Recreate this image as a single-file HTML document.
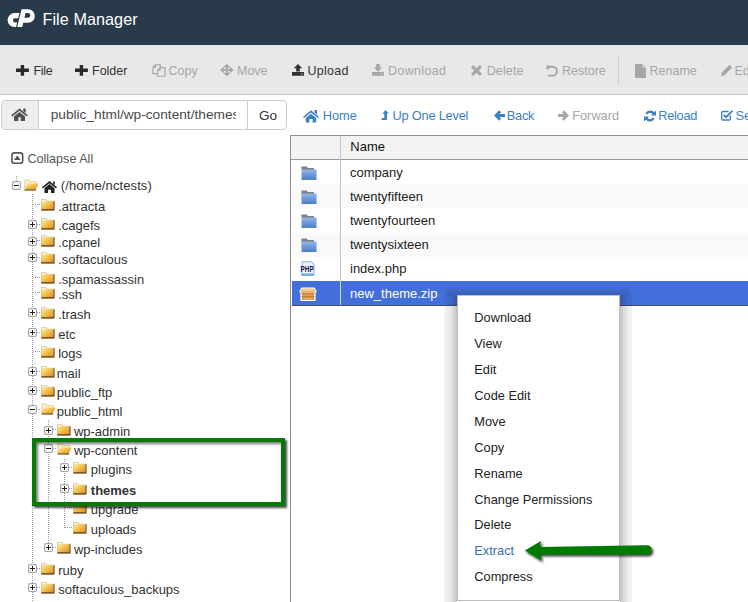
<!DOCTYPE html>
<html><head><meta charset="utf-8">
<style>
*{margin:0;padding:0;box-sizing:border-box}
html,body{width:748px;height:602px;overflow:hidden;background:#fff;font-family:"Liberation Sans",sans-serif;color:#333}
.a{position:absolute;white-space:nowrap}
#hdr{position:absolute;left:0;top:0;width:748px;height:45px;background:#293a4a}
#tb{position:absolute;left:0;top:45px;width:748px;height:50px;background:#e8e8e8;border-bottom:1px solid #c5c5c8}
.tt{font-size:12.5px;line-height:14px;color:#333}
.dis{color:#a6a6a6}
.nav{font-size:12.8px;line-height:14px;color:#3b7fc4}
.tr{font-size:13px;line-height:14px;color:#333}
.tbl{font-size:13px;line-height:14px;color:#222}
.cm{font-size:12.8px;line-height:14px;color:#222}
svg{position:absolute;overflow:visible}
</style></head><body>
<!-- header -->
<div id="hdr"></div>
<svg style="left:0;top:0" width="45" height="45" viewBox="0 0 45 45">
 <path fill="#fff" d="M19.4 13.1 L14.5 13.1 A6.95 6.95 0 0 0 14.5 27 L16.05 27 L17.15 22.5 L15 22.5 A2.15 2.15 0 0 1 15 18.2 L18.2 18.2 Z"/>
 <path fill="#fff" fill-rule="evenodd" d="M21.5 9.2 L28.1 9.2 A6.75 6.75 0 0 1 28.1 22.7 L23.24 22.7 L22.2 27 L17.2 27 Z M25.58 13 L28 13 A2.35 2.35 0 0 1 28 17.7 L24.45 17.7 Z"/>
</svg>
<div class="a" style="left:42.5px;top:9.5px;font-size:16.2px;line-height:18px;color:#fff;letter-spacing:0.06px">File Manager</div>

<!-- toolbar -->
<div id="tb"></div>
<svg style="left:16px;top:65px" width="13" height="11" viewBox="0 0 13 11"><path fill="#2a2a2a" d="M4.7 0h3.4v3.6H12.9V7.1H8.1V10.7H4.7V7.1H0V3.6H4.7z"/></svg>
<div class="a tt" style="left:33.5px;top:64px;letter-spacing:-0.35px">File</div>
<svg style="left:75.2px;top:65px" width="13" height="11" viewBox="0 0 13 11"><path fill="#2a2a2a" d="M4.7 0h3.4v3.6H12.9V7.1H8.1V10.7H4.7V7.1H0V3.6H4.7z"/></svg>
<div class="a tt" style="left:92px;top:64px">Folder</div>

<svg style="left:151.5px;top:64px" width="14" height="13" viewBox="0 0 14 13"><path fill="none" stroke="#a6a6a6" stroke-width="1.15" d="M5.2 9.6H0.9V3.4L3.4 0.9H8.3V3.3 M0.9 3.4H3.4V0.9"/><path fill="none" stroke="#a6a6a6" stroke-width="1.15" d="M5.6 6.1L8.1 3.6H13V12.2H5.6Z M5.6 6.1H8.1V3.6"/></svg>
<div class="a tt dis" style="left:168.5px;top:64px">Copy</div>
<svg style="left:220.3px;top:63.7px" width="14" height="13" viewBox="0 0 14 13"><path fill="#a8a8a8" fill-rule="evenodd" d="M6.85 0 13.7 6.1 6.85 12.2 0 6.1Z M3.9 3.5h2v1.8h-2z M7.8 3.5h2v1.8h-2z M3.9 6.9h2v1.8h-2z M7.8 6.9h2v1.8h-2z"/></svg>
<div class="a tt dis" style="left:237px;top:64px">Move</div>

<svg style="left:291.5px;top:64px" width="12" height="12" viewBox="0 0 12 12"><path fill="#333" d="M6 0 10.3 4.2H7.8V7.6H4.2V4.2H1.7z M0 8h12V11.8H0z"/><rect x="9.3" y="9.4" width="1.3" height="1.1" fill="#e8e8e8"/></svg>
<div class="a tt" style="left:307.5px;top:64px;letter-spacing:0.25px">Upload</div>
<svg style="left:372px;top:64px" width="12" height="12" viewBox="0 0 12 12"><path fill="#a6a6a6" d="M4.2 0h3.6v3.6h2.5L6 7.8 1.7 3.6h2.5z M0 8h12V11.8H0z"/><rect x="9.3" y="9.4" width="1.3" height="1.1" fill="#e8e8e8"/></svg>
<div class="a tt dis" style="left:388px;top:64px;letter-spacing:0.33px">Download</div>
<svg style="left:470.5px;top:64.5px" width="11" height="11" viewBox="0 0 11 11"><path fill="#a6a6a6" d="M0 2.2 2.2 0 5.5 3.3 8.8 0 11 2.2 7.7 5.5 11 8.8 8.8 11 5.5 7.7 2.2 11 0 8.8 3.3 5.5z"/></svg>
<div class="a tt dis" style="left:486.7px;top:64px;letter-spacing:0.12px">Delete</div>
<svg style="left:546.4px;top:64.6px" width="13" height="12" viewBox="0 0 13 12"><path fill="none" stroke="#a6a6a6" stroke-width="1.9" d="M2.5 1.7H6.5A4.45 4.45 0 0 1 6.5 10.6H1.8"/><path fill="#a6a6a6" d="M0.3 0.4H4V2.8L1.6 4.8 0.3 3.6z"/></svg>
<div class="a tt dis" style="left:562px;top:64px">Restore</div>
<div class="a" style="left:618px;top:55px;width:1px;height:30px;background:#cfcfcf"></div>
<svg style="left:635px;top:63.5px" width="11" height="14" viewBox="0 0 11 14"><path fill="#a6a6a6" d="M0 0h7l4 4v10H0z"/><path fill="#c8c8c8" d="M7 0v4h4z"/></svg>
<div class="a tt dis" style="left:649.5px;top:64px">Rename</div>
<svg style="left:721px;top:64px" width="12" height="12" viewBox="0 0 12 12"><path fill="#a6a6a6" d="M0 12 0.8 8.6 8.6 0.8 11.2 3.4 3.4 11.2z"/></svg>
<div class="a tt dis" style="left:734.5px;top:64px">Ed</div>

<!-- path bar -->
<div class="a" style="left:1px;top:100px;width:286px;height:30px;border:1px solid #ccc;border-radius:4px;background:#fff"></div>
<div class="a" style="left:2px;top:101px;width:37px;height:28px;background:#eee;border-right:1px solid #ccc;border-radius:3px 0 0 3px"></div>
<svg style="left:11px;top:108px" width="17" height="13" viewBox="0 0 17 13"><path fill="#505050" d="M8.5 0.6 16.8 7.3 15.7 8.6 8.5 2.8 1.3 8.6 0.2 7.3z M12.3 0.5h2.4v4.4l-2.4-1.9z M3 8.5 8.5 4 14 8.5V13H9.7V9.2H7.3V13H3z"/></svg>
<div class="a" style="left:39px;top:101px;width:197px;height:28px;overflow:hidden">
 <div class="a" style="left:11.7px;top:6px;font-size:13.7px;line-height:16px;color:#4a4a4a">public_html/wp-content/themes</div>
</div>
<div class="a" style="left:247px;top:101px;width:1px;height:28px;background:#ccc"></div>
<div class="a" style="left:259px;top:108px;font-size:13.5px;line-height:16px;color:#333">Go</div>

<!-- nav -->
<svg style="left:303px;top:109.5px" width="16" height="12.5" viewBox="0 0 16 12.5"><path fill="#3b7fc4" d="M8 0.3 16 6.9 14.9 8.1 8 2.6 1.1 8.1 0 6.9z M11.6 0h2.4v4.6l-2.4-2z M2.8 8 8 3.8 13.2 8V12.5H9.6V9H6.4V12.5H2.8z"/></svg>
<div class="a nav" style="left:322.7px;top:108.6px">Home</div>
<svg style="left:381px;top:110px" width="8" height="10" viewBox="0 0 8 10"><path fill="#3b7fc4" d="M4.6 0 7.8 3.4H5.9V10H0.2L1.4 8H3.3V3.4H1.4z"/></svg>
<div class="a nav" style="left:392.4px;top:108.6px;letter-spacing:-0.2px">Up One Level</div>
<svg style="left:493.5px;top:110px" width="11" height="11" viewBox="0 0 11 11"><path fill="#3b7fc4" d="M0 5.5 5.2 0.3 7.3 2.4 5.1 4.1H11V6.9H5.1L7.3 8.6 5.2 10.7z"/></svg>
<div class="a nav" style="left:506.8px;top:108.6px;letter-spacing:-0.25px">Back</div>
<svg style="left:557.5px;top:110px" width="11" height="11" viewBox="0 0 11 11"><path fill="#a6a6a6" d="M11 5.5 5.8 0.3 3.7 2.4 5.9 4.1H0V6.9H5.9L3.7 8.6 5.8 10.7z"/></svg>
<div class="a nav" style="left:572.2px;top:108.6px;color:#a6a6a6">Forward</div>
<svg style="left:644px;top:109.5px" width="12" height="12" viewBox="0 0 12 12"><path fill="none" stroke="#3b7fc4" stroke-width="2.2" d="M10 4.2A4.3 4.3 0 0 0 2.3 4 M2 7.8A4.3 4.3 0 0 0 9.7 8"/><path fill="#3b7fc4" d="M12 0.5V5.5H7z M0 11.5V6.5H5z"/></svg>
<div class="a nav" style="left:658.3px;top:108.6px;letter-spacing:-0.3px">Reload</div>
<svg style="left:720.5px;top:109.5px" width="13" height="11" viewBox="0 0 13 11"><path fill="none" stroke="#3b7fc4" stroke-width="1.3" d="M9.4 5.6V8.7A1.3 1.3 0 0 1 8.1 10H2A1.3 1.3 0 0 1 0.7 8.7V2.8A1.3 1.3 0 0 1 2 1.5H7.6"/><path fill="none" stroke="#3b7fc4" stroke-width="1.9" d="M2.8 5 5 7.2 11.4 0.9"/></svg>
<div class="a nav" style="left:735.4px;top:108.6px">Se</div>

<!-- collapse all -->
<svg style="left:11px;top:152px" width="13" height="12" viewBox="0 0 13 12"><rect x="0.9" y="0.9" width="10.8" height="10.4" rx="2.6" fill="none" stroke="#555" stroke-width="1.6"/><path fill="#555" d="M3 8 6.3 3.6 9.6 8z"/></svg>
<div class="a tr" style="left:27.4px;top:151.8px;font-size:12.6px;color:#555">Collapse All</div>

<div id="tree"><svg width="0" height="0" style="position:absolute"><defs><linearGradient id="fg" x1="0" y1="0" x2="1" y2="1"><stop offset="0" stop-color="#ffeea0"/><stop offset="0.45" stop-color="#f3c250"/><stop offset="1" stop-color="#dc8a20"/></linearGradient></defs></svg>
<div class="a" style="left:16px;top:176px;width:1px;height:5px;background:repeating-linear-gradient(#9a9a9a 0 1px,transparent 1px 2px)"></div>
<div class="a" style="left:32px;top:194px;width:1px;height:408px;background:repeating-linear-gradient(#9a9a9a 0 1px,transparent 1px 2px)"></div>
<div class="a" style="left:48px;top:420px;width:1px;height:128px;background:repeating-linear-gradient(#9a9a9a 0 1px,transparent 1px 2px)"></div>
<div class="a" style="left:64px;top:459px;width:1px;height:69px;background:repeating-linear-gradient(#9a9a9a 0 1px,transparent 1px 2px)"></div>
<svg style="left:11.8px;top:180.9px" width="9" height="9" viewBox="0 0 9 9"><rect x="0.6" y="0.6" width="7.8" height="7.8" rx="1.2" fill="#fff" stroke="#a8a8a8" stroke-width="1.2"/><path d="M2 4.5h5" stroke="#222" stroke-width="1"/></svg>
<svg style="left:24.0px;top:179.3px" width="16" height="12" viewBox="0 0 16 12"><path fill="#d2bfa0" d="M0.5 0.5h4.5l1.2 1.5h6.3v2.5H3.5L0.5 11z"/><path fill="#fdf3c0" d="M1.2 1.2h3.4l1.1 1.3h5.9v2H3.2L1.2 8.5z"/><path fill="url(#fg)" d="M3.4 4.4h11.2l-3 6.6H0.6z"/><path fill="#5e3a0c" d="M0.6 10.6h11.6l-0.3 0.8H0.4z"/></svg>
<svg style="left:42.4px;top:180.7px" width="15" height="12" viewBox="0 0 15 12"><path fill="#222" d="M7.5 0 15 6.3 14 7.5 7.5 2.2 1 7.5 0 6.3z M11 0.6h1.8v3.3L11 2.4z M2.5 7.2 7.5 3 12.5 7.2V12H9V8.8H6V12H2.5z"/></svg>
<div class="a tr" style="left:60.8px;top:179.4px;letter-spacing:0.1px;">(/home/nctests)</div>
<div class="a" style="left:33px;top:204px;width:7px;height:1px;background:repeating-linear-gradient(90deg,#9a9a9a 0 1px,transparent 1px 2px)"></div>
<svg style="left:40.5px;top:199.2px" width="14" height="12" viewBox="0 0 14 12"><path fill="#d2bfa0" d="M0 0.3h5.2l1.2 1.5h6.9v9.6H0z"/><path fill="url(#fg)" d="M0.8 2.2h12v8.3H0.8z"/><path fill="#fdf6c8" d="M0.8 1h4l0.9 1.2H0.8z"/><path fill="#5e3a0c" d="M0.3 10.3h13.2v1.1H0.3z M12.6 2.2h0.9v9.2h-0.9z"/></svg>
<div class="a tr" style="left:58.2px;top:200.3px;">.attracta</div>
<div class="a" style="left:33px;top:224px;width:7px;height:1px;background:repeating-linear-gradient(90deg,#9a9a9a 0 1px,transparent 1px 2px)"></div>
<svg style="left:28.3px;top:219.7px" width="9" height="9" viewBox="0 0 9 9"><rect x="0.6" y="0.6" width="7.8" height="7.8" rx="1.2" fill="#fff" stroke="#a8a8a8" stroke-width="1.2"/><path d="M2 4.5h5" stroke="#222" stroke-width="1"/><path d="M4.5 2v5" stroke="#222" stroke-width="1"/></svg>
<svg style="left:40.5px;top:218.3px" width="14" height="12" viewBox="0 0 14 12"><path fill="#d2bfa0" d="M0 0.3h5.2l1.2 1.5h6.9v9.6H0z"/><path fill="url(#fg)" d="M0.8 2.2h12v8.3H0.8z"/><path fill="#fdf6c8" d="M0.8 1h4l0.9 1.2H0.8z"/><path fill="#5e3a0c" d="M0.3 10.3h13.2v1.1H0.3z M12.6 2.2h0.9v9.2h-0.9z"/></svg>
<div class="a tr" style="left:58.2px;top:219.4px;">.cagefs</div>
<div class="a" style="left:33px;top:240px;width:7px;height:1px;background:repeating-linear-gradient(90deg,#9a9a9a 0 1px,transparent 1px 2px)"></div>
<svg style="left:28.3px;top:236.6px" width="9" height="9" viewBox="0 0 9 9"><rect x="0.6" y="0.6" width="7.8" height="7.8" rx="1.2" fill="#fff" stroke="#a8a8a8" stroke-width="1.2"/><path d="M2 4.5h5" stroke="#222" stroke-width="1"/><path d="M4.5 2v5" stroke="#222" stroke-width="1"/></svg>
<svg style="left:40.5px;top:235.2px" width="14" height="12" viewBox="0 0 14 12"><path fill="#d2bfa0" d="M0 0.3h5.2l1.2 1.5h6.9v9.6H0z"/><path fill="url(#fg)" d="M0.8 2.2h12v8.3H0.8z"/><path fill="#fdf6c8" d="M0.8 1h4l0.9 1.2H0.8z"/><path fill="#5e3a0c" d="M0.3 10.3h13.2v1.1H0.3z M12.6 2.2h0.9v9.2h-0.9z"/></svg>
<div class="a tr" style="left:58.2px;top:236.3px;">.cpanel</div>
<div class="a" style="left:33px;top:257px;width:7px;height:1px;background:repeating-linear-gradient(90deg,#9a9a9a 0 1px,transparent 1px 2px)"></div>
<svg style="left:28.3px;top:253.2px" width="9" height="9" viewBox="0 0 9 9"><rect x="0.6" y="0.6" width="7.8" height="7.8" rx="1.2" fill="#fff" stroke="#a8a8a8" stroke-width="1.2"/><path d="M2 4.5h5" stroke="#222" stroke-width="1"/><path d="M4.5 2v5" stroke="#222" stroke-width="1"/></svg>
<svg style="left:40.5px;top:251.8px" width="14" height="12" viewBox="0 0 14 12"><path fill="#d2bfa0" d="M0 0.3h5.2l1.2 1.5h6.9v9.6H0z"/><path fill="url(#fg)" d="M0.8 2.2h12v8.3H0.8z"/><path fill="#fdf6c8" d="M0.8 1h4l0.9 1.2H0.8z"/><path fill="#5e3a0c" d="M0.3 10.3h13.2v1.1H0.3z M12.6 2.2h0.9v9.2h-0.9z"/></svg>
<div class="a tr" style="left:58.2px;top:252.9px;">.softaculous</div>
<div class="a" style="left:33px;top:277px;width:7px;height:1px;background:repeating-linear-gradient(90deg,#9a9a9a 0 1px,transparent 1px 2px)"></div>
<svg style="left:40.5px;top:271.8px" width="14" height="12" viewBox="0 0 14 12"><path fill="#d2bfa0" d="M0 0.3h5.2l1.2 1.5h6.9v9.6H0z"/><path fill="url(#fg)" d="M0.8 2.2h12v8.3H0.8z"/><path fill="#fdf6c8" d="M0.8 1h4l0.9 1.2H0.8z"/><path fill="#5e3a0c" d="M0.3 10.3h13.2v1.1H0.3z M12.6 2.2h0.9v9.2h-0.9z"/></svg>
<div class="a tr" style="left:58.2px;top:272.9px;">.spamassassin</div>
<div class="a" style="left:33px;top:292px;width:7px;height:1px;background:repeating-linear-gradient(90deg,#9a9a9a 0 1px,transparent 1px 2px)"></div>
<svg style="left:40.5px;top:287.0px" width="14" height="12" viewBox="0 0 14 12"><path fill="#d2bfa0" d="M0 0.3h5.2l1.2 1.5h6.9v9.6H0z"/><path fill="url(#fg)" d="M0.8 2.2h12v8.3H0.8z"/><path fill="#fdf6c8" d="M0.8 1h4l0.9 1.2H0.8z"/><path fill="#5e3a0c" d="M0.3 10.3h13.2v1.1H0.3z M12.6 2.2h0.9v9.2h-0.9z"/></svg>
<div class="a tr" style="left:58.2px;top:288.1px;">.ssh</div>
<div class="a" style="left:33px;top:312px;width:7px;height:1px;background:repeating-linear-gradient(90deg,#9a9a9a 0 1px,transparent 1px 2px)"></div>
<svg style="left:28.3px;top:307.9px" width="9" height="9" viewBox="0 0 9 9"><rect x="0.6" y="0.6" width="7.8" height="7.8" rx="1.2" fill="#fff" stroke="#a8a8a8" stroke-width="1.2"/><path d="M2 4.5h5" stroke="#222" stroke-width="1"/><path d="M4.5 2v5" stroke="#222" stroke-width="1"/></svg>
<svg style="left:40.5px;top:306.5px" width="14" height="12" viewBox="0 0 14 12"><path fill="#d2bfa0" d="M0 0.3h5.2l1.2 1.5h6.9v9.6H0z"/><path fill="url(#fg)" d="M0.8 2.2h12v8.3H0.8z"/><path fill="#fdf6c8" d="M0.8 1h4l0.9 1.2H0.8z"/><path fill="#5e3a0c" d="M0.3 10.3h13.2v1.1H0.3z M12.6 2.2h0.9v9.2h-0.9z"/></svg>
<div class="a tr" style="left:58.2px;top:307.6px;">.trash</div>
<div class="a" style="left:33px;top:332px;width:7px;height:1px;background:repeating-linear-gradient(90deg,#9a9a9a 0 1px,transparent 1px 2px)"></div>
<svg style="left:28.3px;top:327.9px" width="9" height="9" viewBox="0 0 9 9"><rect x="0.6" y="0.6" width="7.8" height="7.8" rx="1.2" fill="#fff" stroke="#a8a8a8" stroke-width="1.2"/><path d="M2 4.5h5" stroke="#222" stroke-width="1"/><path d="M4.5 2v5" stroke="#222" stroke-width="1"/></svg>
<svg style="left:40.5px;top:326.5px" width="14" height="12" viewBox="0 0 14 12"><path fill="#d2bfa0" d="M0 0.3h5.2l1.2 1.5h6.9v9.6H0z"/><path fill="url(#fg)" d="M0.8 2.2h12v8.3H0.8z"/><path fill="#fdf6c8" d="M0.8 1h4l0.9 1.2H0.8z"/><path fill="#5e3a0c" d="M0.3 10.3h13.2v1.1H0.3z M12.6 2.2h0.9v9.2h-0.9z"/></svg>
<div class="a tr" style="left:58.2px;top:327.6px;">etc</div>
<div class="a" style="left:33px;top:351px;width:7px;height:1px;background:repeating-linear-gradient(90deg,#9a9a9a 0 1px,transparent 1px 2px)"></div>
<svg style="left:40.5px;top:345.7px" width="14" height="12" viewBox="0 0 14 12"><path fill="#d2bfa0" d="M0 0.3h5.2l1.2 1.5h6.9v9.6H0z"/><path fill="url(#fg)" d="M0.8 2.2h12v8.3H0.8z"/><path fill="#fdf6c8" d="M0.8 1h4l0.9 1.2H0.8z"/><path fill="#5e3a0c" d="M0.3 10.3h13.2v1.1H0.3z M12.6 2.2h0.9v9.2h-0.9z"/></svg>
<div class="a tr" style="left:58.2px;top:346.8px;">logs</div>
<div class="a" style="left:33px;top:371px;width:7px;height:1px;background:repeating-linear-gradient(90deg,#9a9a9a 0 1px,transparent 1px 2px)"></div>
<svg style="left:28.3px;top:367.0px" width="9" height="9" viewBox="0 0 9 9"><rect x="0.6" y="0.6" width="7.8" height="7.8" rx="1.2" fill="#fff" stroke="#a8a8a8" stroke-width="1.2"/><path d="M2 4.5h5" stroke="#222" stroke-width="1"/><path d="M4.5 2v5" stroke="#222" stroke-width="1"/></svg>
<svg style="left:40.5px;top:365.6px" width="14" height="12" viewBox="0 0 14 12"><path fill="#d2bfa0" d="M0 0.3h5.2l1.2 1.5h6.9v9.6H0z"/><path fill="url(#fg)" d="M0.8 2.2h12v8.3H0.8z"/><path fill="#fdf6c8" d="M0.8 1h4l0.9 1.2H0.8z"/><path fill="#5e3a0c" d="M0.3 10.3h13.2v1.1H0.3z M12.6 2.2h0.9v9.2h-0.9z"/></svg>
<div class="a tr" style="left:56.7px;top:366.7px;">mail</div>
<div class="a" style="left:33px;top:390px;width:7px;height:1px;background:repeating-linear-gradient(90deg,#9a9a9a 0 1px,transparent 1px 2px)"></div>
<svg style="left:28.3px;top:386.3px" width="9" height="9" viewBox="0 0 9 9"><rect x="0.6" y="0.6" width="7.8" height="7.8" rx="1.2" fill="#fff" stroke="#a8a8a8" stroke-width="1.2"/><path d="M2 4.5h5" stroke="#222" stroke-width="1"/><path d="M4.5 2v5" stroke="#222" stroke-width="1"/></svg>
<svg style="left:40.5px;top:384.9px" width="14" height="12" viewBox="0 0 14 12"><path fill="#d2bfa0" d="M0 0.3h5.2l1.2 1.5h6.9v9.6H0z"/><path fill="url(#fg)" d="M0.8 2.2h12v8.3H0.8z"/><path fill="#fdf6c8" d="M0.8 1h4l0.9 1.2H0.8z"/><path fill="#5e3a0c" d="M0.3 10.3h13.2v1.1H0.3z M12.6 2.2h0.9v9.2h-0.9z"/></svg>
<div class="a tr" style="left:56.7px;top:386.0px;">public_ftp</div>
<div class="a" style="left:33px;top:409px;width:7px;height:1px;background:repeating-linear-gradient(90deg,#9a9a9a 0 1px,transparent 1px 2px)"></div>
<svg style="left:28.3px;top:404.9px" width="9" height="9" viewBox="0 0 9 9"><rect x="0.6" y="0.6" width="7.8" height="7.8" rx="1.2" fill="#fff" stroke="#a8a8a8" stroke-width="1.2"/><path d="M2 4.5h5" stroke="#222" stroke-width="1"/></svg>
<svg style="left:40.5px;top:403.3px" width="16" height="12" viewBox="0 0 16 12"><path fill="#d2bfa0" d="M0.5 0.5h4.5l1.2 1.5h6.3v2.5H3.5L0.5 11z"/><path fill="#fdf3c0" d="M1.2 1.2h3.4l1.1 1.3h5.9v2H3.2L1.2 8.5z"/><path fill="url(#fg)" d="M3.4 4.4h11.2l-3 6.6H0.6z"/><path fill="#5e3a0c" d="M0.6 10.6h11.6l-0.3 0.8H0.4z"/></svg>
<div class="a tr" style="left:56.7px;top:404.6px;">public_html</div>
<div class="a" style="left:49px;top:429px;width:8px;height:1px;background:repeating-linear-gradient(90deg,#9a9a9a 0 1px,transparent 1px 2px)"></div>
<svg style="left:44.3px;top:425.5px" width="9" height="9" viewBox="0 0 9 9"><rect x="0.6" y="0.6" width="7.8" height="7.8" rx="1.2" fill="#fff" stroke="#a8a8a8" stroke-width="1.2"/><path d="M2 4.5h5" stroke="#222" stroke-width="1"/><path d="M4.5 2v5" stroke="#222" stroke-width="1"/></svg>
<svg style="left:57.0px;top:424.1px" width="14" height="12" viewBox="0 0 14 12"><path fill="#d2bfa0" d="M0 0.3h5.2l1.2 1.5h6.9v9.6H0z"/><path fill="url(#fg)" d="M0.8 2.2h12v8.3H0.8z"/><path fill="#fdf6c8" d="M0.8 1h4l0.9 1.2H0.8z"/><path fill="#5e3a0c" d="M0.3 10.3h13.2v1.1H0.3z M12.6 2.2h0.9v9.2h-0.9z"/></svg>
<div class="a tr" style="left:73.9px;top:425.2px;">wp-admin</div>
<div class="a" style="left:49px;top:448px;width:8px;height:1px;background:repeating-linear-gradient(90deg,#9a9a9a 0 1px,transparent 1px 2px)"></div>
<svg style="left:44.3px;top:444.2px" width="9" height="9" viewBox="0 0 9 9"><rect x="0.6" y="0.6" width="7.8" height="7.8" rx="1.2" fill="#fff" stroke="#a8a8a8" stroke-width="1.2"/><path d="M2 4.5h5" stroke="#222" stroke-width="1"/></svg>
<svg style="left:57.0px;top:442.6px" width="16" height="12" viewBox="0 0 16 12"><path fill="#d2bfa0" d="M0.5 0.5h4.5l1.2 1.5h6.3v2.5H3.5L0.5 11z"/><path fill="#fdf3c0" d="M1.2 1.2h3.4l1.1 1.3h5.9v2H3.2L1.2 8.5z"/><path fill="url(#fg)" d="M3.4 4.4h11.2l-3 6.6H0.6z"/><path fill="#5e3a0c" d="M0.6 10.6h11.6l-0.3 0.8H0.4z"/></svg>
<div class="a tr" style="left:73.9px;top:443.9px;">wp-content</div>
<div class="a" style="left:65px;top:467px;width:7px;height:1px;background:repeating-linear-gradient(90deg,#9a9a9a 0 1px,transparent 1px 2px)"></div>
<svg style="left:60.3px;top:463.3px" width="9" height="9" viewBox="0 0 9 9"><rect x="0.6" y="0.6" width="7.8" height="7.8" rx="1.2" fill="#fff" stroke="#a8a8a8" stroke-width="1.2"/><path d="M2 4.5h5" stroke="#222" stroke-width="1"/><path d="M4.5 2v5" stroke="#222" stroke-width="1"/></svg>
<svg style="left:72.8px;top:461.9px" width="14" height="12" viewBox="0 0 14 12"><path fill="#d2bfa0" d="M0 0.3h5.2l1.2 1.5h6.9v9.6H0z"/><path fill="url(#fg)" d="M0.8 2.2h12v8.3H0.8z"/><path fill="#fdf6c8" d="M0.8 1h4l0.9 1.2H0.8z"/><path fill="#5e3a0c" d="M0.3 10.3h13.2v1.1H0.3z M12.6 2.2h0.9v9.2h-0.9z"/></svg>
<div class="a tr" style="left:90.8px;top:463.0px;">plugins</div>
<div class="a" style="left:65px;top:488px;width:7px;height:1px;background:repeating-linear-gradient(90deg,#9a9a9a 0 1px,transparent 1px 2px)"></div>
<svg style="left:60.3px;top:484.2px" width="9" height="9" viewBox="0 0 9 9"><rect x="0.6" y="0.6" width="7.8" height="7.8" rx="1.2" fill="#fff" stroke="#a8a8a8" stroke-width="1.2"/><path d="M2 4.5h5" stroke="#222" stroke-width="1"/><path d="M4.5 2v5" stroke="#222" stroke-width="1"/></svg>
<svg style="left:72.8px;top:482.8px" width="14" height="12" viewBox="0 0 14 12"><path fill="#d2bfa0" d="M0 0.3h5.2l1.2 1.5h6.9v9.6H0z"/><path fill="url(#fg)" d="M0.8 2.2h12v8.3H0.8z"/><path fill="#fdf6c8" d="M0.8 1h4l0.9 1.2H0.8z"/><path fill="#5e3a0c" d="M0.3 10.3h13.2v1.1H0.3z M12.6 2.2h0.9v9.2h-0.9z"/></svg>
<div class="a tr" style="left:90.8px;top:483.9px;font-weight:bold;">themes</div>
<div class="a" style="left:65px;top:507px;width:7px;height:1px;background:repeating-linear-gradient(90deg,#9a9a9a 0 1px,transparent 1px 2px)"></div>
<svg style="left:72.8px;top:501.9px" width="14" height="12" viewBox="0 0 14 12"><path fill="#d2bfa0" d="M0 0.3h5.2l1.2 1.5h6.9v9.6H0z"/><path fill="url(#fg)" d="M0.8 2.2h12v8.3H0.8z"/><path fill="#fdf6c8" d="M0.8 1h4l0.9 1.2H0.8z"/><path fill="#5e3a0c" d="M0.3 10.3h13.2v1.1H0.3z M12.6 2.2h0.9v9.2h-0.9z"/></svg>
<div class="a tr" style="left:90.8px;top:503.0px;">upgrade</div>
<div class="a" style="left:65px;top:527px;width:7px;height:1px;background:repeating-linear-gradient(90deg,#9a9a9a 0 1px,transparent 1px 2px)"></div>
<svg style="left:72.8px;top:521.8px" width="14" height="12" viewBox="0 0 14 12"><path fill="#d2bfa0" d="M0 0.3h5.2l1.2 1.5h6.9v9.6H0z"/><path fill="url(#fg)" d="M0.8 2.2h12v8.3H0.8z"/><path fill="#fdf6c8" d="M0.8 1h4l0.9 1.2H0.8z"/><path fill="#5e3a0c" d="M0.3 10.3h13.2v1.1H0.3z M12.6 2.2h0.9v9.2h-0.9z"/></svg>
<div class="a tr" style="left:90.8px;top:522.9px;">uploads</div>
<div class="a" style="left:49px;top:547px;width:8px;height:1px;background:repeating-linear-gradient(90deg,#9a9a9a 0 1px,transparent 1px 2px)"></div>
<svg style="left:44.3px;top:543.3px" width="9" height="9" viewBox="0 0 9 9"><rect x="0.6" y="0.6" width="7.8" height="7.8" rx="1.2" fill="#fff" stroke="#a8a8a8" stroke-width="1.2"/><path d="M2 4.5h5" stroke="#222" stroke-width="1"/><path d="M4.5 2v5" stroke="#222" stroke-width="1"/></svg>
<svg style="left:57.0px;top:541.9px" width="14" height="12" viewBox="0 0 14 12"><path fill="#d2bfa0" d="M0 0.3h5.2l1.2 1.5h6.9v9.6H0z"/><path fill="url(#fg)" d="M0.8 2.2h12v8.3H0.8z"/><path fill="#fdf6c8" d="M0.8 1h4l0.9 1.2H0.8z"/><path fill="#5e3a0c" d="M0.3 10.3h13.2v1.1H0.3z M12.6 2.2h0.9v9.2h-0.9z"/></svg>
<div class="a tr" style="left:73.9px;top:543.0px;">wp-includes</div>
<div class="a" style="left:33px;top:568px;width:7px;height:1px;background:repeating-linear-gradient(90deg,#9a9a9a 0 1px,transparent 1px 2px)"></div>
<svg style="left:28.3px;top:564.1px" width="9" height="9" viewBox="0 0 9 9"><rect x="0.6" y="0.6" width="7.8" height="7.8" rx="1.2" fill="#fff" stroke="#a8a8a8" stroke-width="1.2"/><path d="M2 4.5h5" stroke="#222" stroke-width="1"/><path d="M4.5 2v5" stroke="#222" stroke-width="1"/></svg>
<svg style="left:40.5px;top:562.7px" width="14" height="12" viewBox="0 0 14 12"><path fill="#d2bfa0" d="M0 0.3h5.2l1.2 1.5h6.9v9.6H0z"/><path fill="url(#fg)" d="M0.8 2.2h12v8.3H0.8z"/><path fill="#fdf6c8" d="M0.8 1h4l0.9 1.2H0.8z"/><path fill="#5e3a0c" d="M0.3 10.3h13.2v1.1H0.3z M12.6 2.2h0.9v9.2h-0.9z"/></svg>
<div class="a tr" style="left:58.2px;top:563.8px;">ruby</div>
<div class="a" style="left:33px;top:587px;width:7px;height:1px;background:repeating-linear-gradient(90deg,#9a9a9a 0 1px,transparent 1px 2px)"></div>
<svg style="left:28.3px;top:583.4px" width="9" height="9" viewBox="0 0 9 9"><rect x="0.6" y="0.6" width="7.8" height="7.8" rx="1.2" fill="#fff" stroke="#a8a8a8" stroke-width="1.2"/><path d="M2 4.5h5" stroke="#222" stroke-width="1"/><path d="M4.5 2v5" stroke="#222" stroke-width="1"/></svg>
<svg style="left:40.5px;top:582.0px" width="14" height="12" viewBox="0 0 14 12"><path fill="#d2bfa0" d="M0 0.3h5.2l1.2 1.5h6.9v9.6H0z"/><path fill="url(#fg)" d="M0.8 2.2h12v8.3H0.8z"/><path fill="#fdf6c8" d="M0.8 1h4l0.9 1.2H0.8z"/><path fill="#5e3a0c" d="M0.3 10.3h13.2v1.1H0.3z M12.6 2.2h0.9v9.2h-0.9z"/></svg>
<div class="a tr" style="left:58.2px;top:583.1px;">softaculous_backups</div></div><!--/tree-->

<!-- table -->
<div class="a" style="left:290px;top:135px;width:460px;height:470px;border-left:1.5px solid #8f8f8f;border-top:1px solid #8f8f8f"></div>
<div class="a" style="left:291px;top:136px;width:460px;height:24px;background:#f2f2f2;border-bottom:1px solid #999"></div>
<div class="a" style="left:340px;top:136px;width:1px;height:170px;background:#c8c8c8"></div>
<div class="a tbl" style="left:350.3px;top:140px;font-size:13px;color:#111">Name</div>
<div id="rows"><svg width="0" height="0" style="position:absolute"><defs><linearGradient id="bf" x1="0" y1="0" x2="0" y2="1"><stop offset="0" stop-color="#8fb4e6"/><stop offset="1" stop-color="#4f82c8"/></linearGradient><linearGradient id="zb" x1="0" y1="0" x2="0" y2="1"><stop offset="0" stop-color="#e4a765"/><stop offset="1" stop-color="#d08a45"/></linearGradient></defs></svg>
<div class="a" style="left:291.5px;top:160px;width:460px;height:24.2px;background:#fff"></div>
<div class="a" style="left:340px;top:160px;width:1px;height:24.2px;background:#c2c2c2"></div>
<svg style="left:300.5px;top:165.7px" width="16" height="14" viewBox="0 0 16 14"><path fill="#7a7f88" d="M0.5 0.5h5l1.5 1.5h6v3H0.5z"/><path fill="url(#bf)" d="M0.5 3.5h15v9.8H0.5z"/><path fill="#3d6aa8" d="M0.5 13h15v0.8H0.5z"/><path d="M2 5.3h12" stroke="#a9c6ee" stroke-width="0.8" stroke-dasharray="1 1"/></svg>
<div class="a tbl" style="left:350px;top:165.6px;color:#222">company</div>
<div class="a" style="left:291.5px;top:184.2px;width:460px;height:24.2px;background:#f9f9f9"></div>
<div class="a" style="left:340px;top:184.2px;width:1px;height:24.2px;background:#c2c2c2"></div>
<svg style="left:300.5px;top:189.9px" width="16" height="14" viewBox="0 0 16 14"><path fill="#7a7f88" d="M0.5 0.5h5l1.5 1.5h6v3H0.5z"/><path fill="url(#bf)" d="M0.5 3.5h15v9.8H0.5z"/><path fill="#3d6aa8" d="M0.5 13h15v0.8H0.5z"/><path d="M2 5.3h12" stroke="#a9c6ee" stroke-width="0.8" stroke-dasharray="1 1"/></svg>
<div class="a tbl" style="left:350px;top:189.8px;color:#222">twentyfifteen</div>
<div class="a" style="left:291.5px;top:208.4px;width:460px;height:24.2px;background:#fff"></div>
<div class="a" style="left:340px;top:208.4px;width:1px;height:24.2px;background:#c2c2c2"></div>
<svg style="left:300.5px;top:214.1px" width="16" height="14" viewBox="0 0 16 14"><path fill="#7a7f88" d="M0.5 0.5h5l1.5 1.5h6v3H0.5z"/><path fill="url(#bf)" d="M0.5 3.5h15v9.8H0.5z"/><path fill="#3d6aa8" d="M0.5 13h15v0.8H0.5z"/><path d="M2 5.3h12" stroke="#a9c6ee" stroke-width="0.8" stroke-dasharray="1 1"/></svg>
<div class="a tbl" style="left:350px;top:214.0px;color:#222">twentyfourteen</div>
<div class="a" style="left:291.5px;top:232.6px;width:460px;height:24.2px;background:#f9f9f9"></div>
<div class="a" style="left:340px;top:232.6px;width:1px;height:24.2px;background:#c2c2c2"></div>
<svg style="left:300.5px;top:238.3px" width="16" height="14" viewBox="0 0 16 14"><path fill="#7a7f88" d="M0.5 0.5h5l1.5 1.5h6v3H0.5z"/><path fill="url(#bf)" d="M0.5 3.5h15v9.8H0.5z"/><path fill="#3d6aa8" d="M0.5 13h15v0.8H0.5z"/><path d="M2 5.3h12" stroke="#a9c6ee" stroke-width="0.8" stroke-dasharray="1 1"/></svg>
<div class="a tbl" style="left:350px;top:238.2px;color:#222">twentysixteen</div>
<div class="a" style="left:291.5px;top:256.8px;width:460px;height:24.2px;background:#fff"></div>
<div class="a" style="left:340px;top:256.8px;width:1px;height:24.2px;background:#c2c2c2"></div>
<svg style="left:300px;top:261.1px" width="16" height="16" viewBox="0 0 16 16"><path fill="#eaf6ff" stroke="#7fb2e6" stroke-width="1" d="M2.2 0.8h9.5l2.3 2.5v11.2H1.6z"/><path d="M1.8 13.2h11.8" stroke="#5d9be0" stroke-width="1.3"/><text x="0.6" y="10.8" textLength="13" lengthAdjust="spacingAndGlyphs" font-family="Liberation Sans" font-weight="bold" font-size="8.6" fill="#14124a">PHP</text></svg>
<div class="a tbl" style="left:350px;top:262.4px;color:#222">index.php</div>
<div class="a" style="left:291.5px;top:281px;width:460px;height:24.0px;background:#426fd9"></div>
<div class="a" style="left:291.5px;top:304.6px;width:460px;height:1px;background:#4a4a60"></div>
<div class="a" style="left:340px;top:281px;width:1px;height:24.0px;background:#c8d2ee"></div>
<svg style="left:298.5px;top:286.6px" width="18" height="15" viewBox="0 0 18 15"><path fill="#fff" d="M0.2 4.6 2.4 0.6H15.6L17.8 4.6 16.6 6.3V13.9H1.4V6.3z"/><path fill="url(#zb)" d="M2.8 6.2H15.2V12.8H2.8z"/><path fill="#eab676" d="M1.3 4.5 3.1 1.4H14.9L16.7 4.5 15.6 6.2H2.4z"/><path fill="#f8dcae" d="M4 2.3H14L14.8 3.6H3.2z"/><path fill="#b8742c" d="M2.8 6.2H15.2V7.3H2.8z M2.8 9.3H15.2V10.1H2.8z"/><path d="M5 11.6h8" stroke="#f6d29a" stroke-width="0.9" stroke-dasharray="1 1"/></svg>
<div class="a tbl" style="left:350px;top:286.6px;color:#fff">new_theme.zip</div></div><!--/rows-->

<!-- context menu -->
<div class="a" style="left:444px;top:295px;width:13px;height:307px;background:linear-gradient(90deg,rgba(0,0,0,.04),rgba(0,0,0,.1) 55%,rgba(0,0,0,.24))"></div>
<div class="a" style="left:620px;top:295px;width:12px;height:307px;background:linear-gradient(90deg,rgba(0,0,0,.24),rgba(0,0,0,.14) 35%,rgba(0,0,0,.07) 70%,rgba(0,0,0,.05))"></div>
<div class="a" style="left:446px;top:287px;width:184px;height:8px;background:linear-gradient(0deg,rgba(0,0,0,.14),rgba(0,0,0,.02))"></div>
<div class="a" style="left:457px;top:295px;width:163px;height:306px;background:#fff;border:1px solid #bdbdbd"></div>
<div id="menu"><div class="a cm" style="left:474.3px;top:310.6px;color:#222">Download</div>
<div class="a cm" style="left:474.3px;top:336.6px;color:#222">View</div>
<div class="a cm" style="left:474.3px;top:362.6px;color:#222">Edit</div>
<div class="a cm" style="left:474.3px;top:388.6px;color:#222">Code Edit</div>
<div class="a cm" style="left:474.3px;top:414.6px;color:#222">Move</div>
<div class="a cm" style="left:474.3px;top:440.6px;color:#222">Copy</div>
<div class="a cm" style="left:474.3px;top:466.6px;color:#222">Rename</div>
<div class="a cm" style="left:474.3px;top:493.1px;color:#222">Change Permissions</div>
<div class="a cm" style="left:474.3px;top:517.8px;color:#222">Delete</div>
<div class="a cm" style="left:474.3px;top:543.7px;color:#3d6db0">Extract</div>
<div class="a cm" style="left:474.3px;top:569.7px;color:#222">Compress</div></div><!--/menu-->

<!-- green box & arrow -->
<div class="a" style="left:32px;top:438px;width:253px;height:68px;border:4px solid #037a03;box-shadow:1.5px 1.5px 2px rgba(0,0,0,0.7), inset 2px 2px 3px rgba(0,0,0,0.55)"></div>
<svg style="left:0;top:0" width="748" height="602" viewBox="0 0 748 602">
 <defs><filter id="sh" x="-20%" y="-50%" width="140%" height="200%"><feDropShadow dx="1.6" dy="1.8" stdDeviation="1" flood-color="#111" flood-opacity="0.85"/></filter></defs>
 <path filter="url(#sh)" fill="#037a03" d="M524.8 550.6 L541 541 L539.8 547 L647 545.2 A4.65 4.65 0 0 1 647 554.5 L539.8 554.6 L541.5 560.7 Z"/>
</svg>
</body></html>
